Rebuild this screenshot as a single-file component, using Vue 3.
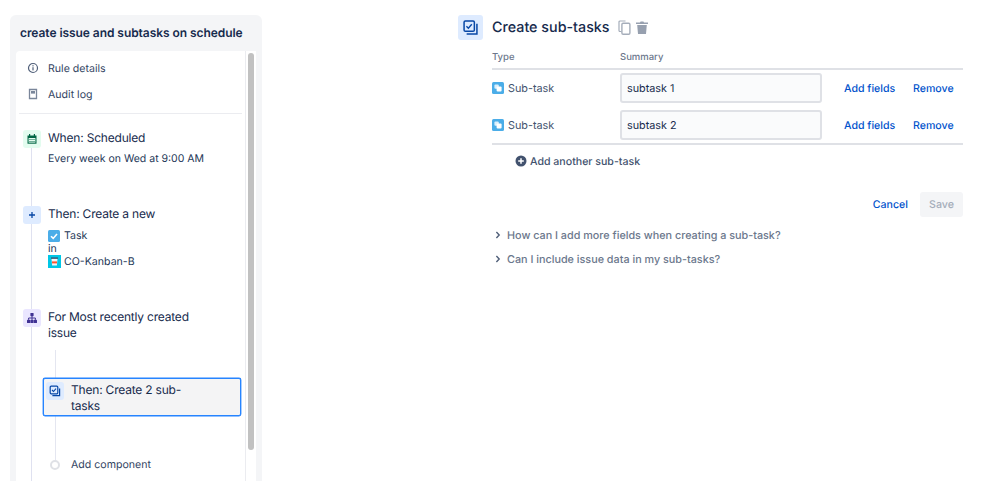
<script setup>
const rows = ['subtask 1', 'subtask 2']
const faqs = ['How can I add more fields when creating a sub-task?', 'Can I include issue data in my sub-tasks?']
</script>

<template>
  <div class="page">
    <aside class="sidebar">
      <h2 class="rule-name">create issue and subtasks on schedule</h2>
      <div class="panel">
        <div class="panel-body">
          <div class="menu-row">
            <svg class="menu-icon" viewBox="0 0 12 12"><circle cx="6" cy="6" r="4.5" fill="none" stroke="#505f79" stroke-width="1.2"/><rect x="5.4" y="5.2" width="1.2" height="3.2" fill="#505f79"/><rect x="5.4" y="3.2" width="1.2" height="1.2" fill="#505f79"/></svg>
            <span>Rule details</span>
          </div>
          <div class="menu-row">
            <svg class="menu-icon" viewBox="0 0 12 12"><path d="M2.5 1.5h7v9h-7z" fill="#fff" stroke="#7a869a" stroke-width="1.3"/><rect x="4" y="3" width="4" height="2.6" fill="#7a869a"/></svg>
            <span>Audit log</span>
          </div>
          <div class="divider"></div>

          <div class="timeline">
            <section class="step step-when">
              <span class="node node-green">
                <svg viewBox="0 0 12 12" width="12" height="12"><path d="M1.5 2.5h9v8.2h-9z" fill="#006644"/><rect x="3" y="1" width="1.2" height="2.5" fill="#006644"/><rect x="7.8" y="1" width="1.2" height="2.5" fill="#006644"/><rect x="2.6" y="5" width="6.8" height="4.6" fill="#e3fcef"/><path d="M3.5 6h1v1h-1zM5.5 6h1v1h-1zM7.5 6h1v1h-1zM3.5 8h1v1h-1zM5.5 8h1v1h-1zM7.5 8h1v1h-1z" fill="#006644"/></svg>
              </span>
              <div class="step-text">
                <div class="step-title">When: Scheduled</div>
                <div class="step-sub">Every week on Wed at 9:00 AM</div>
              </div>
            </section>

            <section class="step step-then">
              <span class="node node-blue">
                <svg viewBox="0 0 10 10" width="10" height="10"><path d="M5 2v6M2 5h6" stroke="#0747a6" stroke-width="1.3" fill="none"/></svg>
              </span>
              <div class="step-text">
                <div class="step-title">Then: Create a new</div>
                <div class="detail detail-task">
                  <svg viewBox="0 0 12 12" width="12" height="12"><rect width="12" height="12" rx="1.5" fill="#4bade8"/><path d="M3 6.2l2.2 2.2L9 4" stroke="#fff" stroke-width="1.6" fill="none"/></svg>
                  <span>Task</span>
                </div>
                <div class="detail detail-in">in</div>
                <div class="detail detail-project">
                  <svg viewBox="0 0 13 13" width="13" height="13"><rect width="13" height="13" fill="#00c7e6"/><path d="M3.5 3.5h6l-.6 7H4.1z" fill="#f4f5f7"/><rect x="3" y="2.4" width="7" height="1.4" fill="#42526e"/><rect x="4" y="6.4" width="5" height="2" fill="#ff5630"/></svg>
                  <span>CO-Kanban-B</span>
                </div>
              </div>
            </section>

            <section class="step step-for">
              <span class="node node-purple">
                <svg viewBox="0 0 12 12" width="12" height="12"><g fill="#403294"><rect x="4.4" y="1" width="3.2" height="3.2" rx=".6"/><rect x="1" y="7.8" width="3.2" height="3.2" rx=".6"/><rect x="4.4" y="7.8" width="3.2" height="3.2" rx=".6"/><rect x="7.8" y="7.8" width="3.2" height="3.2" rx=".6"/></g><path d="M6 4v3.8M2.6 7.8V6h6.8v1.8" stroke="#403294" fill="none"/></svg>
              </span>
              <div class="step-text step-text-wide">
                <div class="step-title">For Most recently created issue</div>
              </div>
            </section>

            <div class="nested">
              <section class="selected">
                <span class="node node-blue">
                  <svg viewBox="0 0 12 12" width="12" height="12"><rect x="1.2" y="1.2" width="7.6" height="7.6" rx="1" fill="none" stroke="#0747a6" stroke-width="1.2"/><path d="M3 5l1.5 1.5L7 3.6" fill="none" stroke="#0747a6" stroke-width="1.1"/><path d="M10.6 3.4v7.2H3.4" fill="none" stroke="#0747a6" stroke-width="1.2"/></svg>
                </span>
                <div class="selected-text">Then: Create 2 sub-tasks</div>
              </section>
              <div class="add-component">
                <span class="circle"></span>
                <span>Add component</span>
              </div>
            </div>
          </div>
        </div>
        <div class="scroll-track"><div class="scroll-thumb"></div></div>
      </div>
    </aside>

    <main class="main">
      <header class="head">
        <span class="head-icon">
          <svg viewBox="0 0 14 14" width="15" height="15"><rect x="1" y="1" width="9.6" height="9.6" rx="1.2" fill="none" stroke="#0747a6" stroke-width="1.4"/><path d="M3.2 5.8l1.8 1.8 3.2-3.6" fill="none" stroke="#0747a6" stroke-width="1.3"/><path d="M13 3.4V13H3.4" fill="none" stroke="#0747a6" stroke-width="1.4"/></svg>
        </span>
        <h1>Create sub-tasks</h1>
        <svg class="copy" viewBox="0 0 13 15" width="13" height="15"><path d="M3.5 11.5H2a1 1 0 0 1-1-1V2a1 1 0 0 1 1-1h5.5" fill="none" stroke="#a5adba" stroke-width="1.2"/><rect x="3.9" y="3.2" width="8" height="11" rx="1.2" fill="#fff" stroke="#a5adba" stroke-width="1.4"/></svg>
        <svg class="trash" viewBox="0 0 12 13" width="12" height="13"><path d="M0 1.6h4L4.6.5h2.8L8 1.6h4v1.5H0z" fill="#97a0af"/><path d="M1.2 4h9.6l-.8 9H2z" fill="#97a0af"/></svg>
      </header>

      <div class="table">
        <div class="grid-row table-head">
          <span>Type</span>
          <span>Summary</span>
        </div>
        <div class="rows">
          <div v-for="r in rows" :key="r" class="grid-row data-row">
            <div class="type-cell">
              <svg viewBox="0 0 12 12" width="12" height="12"><rect width="12" height="12" rx="1.5" fill="#4bade8"/><rect x="2.4" y="2.4" width="4.4" height="4.4" rx="1" fill="#fff" opacity=".8"/><rect x="4.6" y="4.6" width="5" height="5" rx="1" fill="#fff"/></svg>
              <span>Sub-task</span>
            </div>
            <div class="input">{{ r }}</div>
            <a class="link add-fields">Add fields</a>
            <a class="link remove">Remove</a>
          </div>
        </div>
        <div class="add-another">
          <svg viewBox="0 0 12 12" width="12" height="12"><circle cx="6" cy="6" r="5.5" fill="#42526e"/><path d="M6 3.2v5.6M3.2 6h5.6" stroke="#fff" stroke-width="1.5"/></svg>
          <span>Add another sub-task</span>
        </div>
        <div class="actions">
          <a class="link cancel">Cancel</a>
          <span class="save">Save</span>
        </div>
      </div>

      <div class="faqs">
        <div v-for="f in faqs" :key="f" class="faq">
          <svg viewBox="0 0 6 8" width="6" height="8"><path d="M1.4 1l2.8 3-2.8 3" fill="none" stroke="#505f79" stroke-width="1.4"/></svg>
          <span>{{ f }}</span>
        </div>
      </div>
    </main>
  </div>
</template>

<style>
html, body { margin: 0; background: #fff; }
</style>

<style scoped>
.page {
  display: flex;
  align-items: flex-start;
  width: 998px;
  height: 481px;
  overflow: hidden;
  font-family: Inter, "Liberation Sans", sans-serif;
  color: #172b4d;
  background: #fff;
  text-rendering: geometricPrecision;
}
.sidebar {
  flex: none;
  width: 252px;
  height: 520px;
  margin: 15px 0 0 10px;
  padding: 0 6px;
  box-sizing: border-box;
  background: #f4f5f7;
  border-radius: 6px;
}
.rule-name {
  margin: 0;
  padding: 10px 4px 0;
  height: 36px;
  box-sizing: border-box;
  font-size: 12px;
  line-height: 16px;
  font-weight: 600;
  letter-spacing: -.06px;
  white-space: nowrap;
}
.panel {
  display: flex;
  height: 480px;
  background: #fff;
  border-radius: 4px 0 0 0;
}
.panel-body {
  width: 230px;
  box-sizing: border-box;
  border-right: 1px solid #ebecf0;
  padding: 4px 3px 0 3px;
  flex: none;
}
.scroll-track {
  flex: 1;
  padding: 2px 2px 0 2px;
}
.scroll-thumb {
  width: 6px;
  height: 397px;
  border-radius: 3px;
  background: #c1c1c1;
}
.menu-row {
  display: flex;
  align-items: center;
  height: 26px;
  font-size: 10.6px;
  color: #344563;
  padding-left: 8px;
}
.menu-icon {
  width: 12px;
  height: 12px;
  margin-right: 9px;
}
.divider {
  height: 1px;
  background: #ebecf0;
  margin-top: 6px;
}
.timeline {
  position: relative;
  padding: 16px 0 0 4px;
}
.timeline::before {
  content: "";
  position: absolute;
  left: 12px;
  top: 30px;
  bottom: -200px;
  width: 1px;
  background: #dfe1f0;
}
.step {
  position: relative;
  display: flex;
  gap: 7px;
}
.step-when { height: 76px; }
.step-then { height: 103px; }
.step-for { height: 69px; }
.node {
  position: relative;
  flex: none;
  display: flex;
  align-items: center;
  justify-content: center;
  width: 18px;
  height: 18px;
  border-radius: 3px;
}
.node-green { background: #e3fcef; }
.node-blue { background: #deebff; }
.node-purple { background: #eae6ff; }
.step-text-wide { width: 160px; }
.step-title {
  font-size: 12px;
  line-height: 16px;
  letter-spacing: -.2px;
  color: #172b4d;
}
.step-sub {
  margin-top: 5px;
  font-size: 10.5px;
  line-height: 16px;
  color: #253858;
}
.detail {
  display: flex;
  align-items: center;
  gap: 4px;
  font-size: 10.6px;
  line-height: 13px;
  color: #253858;
}
.detail-task { margin-top: 7px; }
.detail-project { gap: 3px; }
.nested {
  position: relative;
  margin-left: 20px;
}
.nested::before {
  content: "";
  position: absolute;
  left: 12px;
  top: -28px;
  height: 111px;
  width: 1px;
  background: #e4e6f0;
}
.selected {
  position: relative;
  display: flex;
  gap: 7px;
  box-sizing: border-box;
  width: 198px;
  height: 38px;
  padding: 3px 2px;
  border: 1px solid #2684ff;
  border-radius: 2px;
  background: #f4f4f5;
  box-shadow: 0 0 0 .4px #2684ff;
}
.selected-text {
  width: 120px;
  font-size: 12px;
  line-height: 16px;
  letter-spacing: -.2px;
}
.add-component {
  position: relative;
  display: flex;
  align-items: center;
  gap: 11px;
  margin: 42px 0 0 7px;
  font-size: 10.6px;
  line-height: 14px;
  color: #344563;
}
.circle {
  flex: none;
  box-sizing: border-box;
  width: 10px;
  height: 10px;
  border-radius: 50%;
  border: 2px solid #dfe1e6;
  background: #fff;
}
.main {
  flex: none;
  width: 505px;
  margin: 15px 0 0 196px;
}
.head {
  display: flex;
  align-items: center;
  height: 25px;
}
.head-icon {
  display: flex;
  align-items: center;
  justify-content: center;
  width: 25px;
  height: 25px;
  margin-right: 9px;
  border-radius: 3px;
  background: #deebff;
}
h1 {
  width: 120px;
  margin: 0 6px 0 0;
  font-size: 14.3px;
  line-height: 25px;
  font-weight: 500;
  color: #172b4d;
  white-space: nowrap;
}
.trash { margin-left: 5px; }
.table {
  margin-left: 34px;
  width: 471px;
}
.grid-row {
  display: grid;
  grid-template-columns: 128px 202px 22px 51px 18px 41px;
  align-items: center;
}
.table-head {
  height: 27px;
  padding-top: 5px;
  box-sizing: border-box;
  font-size: 9.5px;
  font-weight: 500;
  color: #6b778c;
  margin-top: 1px;
}
.rows {
  border-top: 2px solid #dfe1e6;
  border-bottom: 2px solid #dfe1e6;
  padding: 3px 0;
}
.data-row { height: 30px; }
.data-row + .data-row { margin-top: 7px; }
.type-cell {
  display: flex;
  align-items: center;
  gap: 4px;
  font-size: 10.8px;
  color: #42526e;
}
.input {
  box-sizing: border-box;
  height: 30px;
  line-height: 27px;
  padding: 0 5px;
  border: 2px solid #dfe1e6;
  border-radius: 3px;
  background: #fafbfc;
  font-size: 10.8px;
  color: #172b4d;
}
.link {
  font-size: 10.6px;
  font-weight: 500;
  color: #0052cc;
  white-space: nowrap;
}
.add-fields { grid-column: 4; }
.remove { grid-column: 6; }
.add-another {
  display: flex;
  align-items: center;
  gap: 3px;
  height: 14px;
  margin: 9px 0 0 23px;
  font-size: 10.6px;
  font-weight: 500;
  color: #42526e;
}
.actions {
  display: flex;
  align-items: center;
  justify-content: flex-end;
  gap: 12px;
  margin-top: 24px;
}
.save {
  width: 43px;
  height: 25px;
  line-height: 25px;
  text-align: center;
  border-radius: 3px;
  background: #f4f5f7;
  font-size: 10.7px;
  font-weight: 500;
  color: #a5adba;
}
.faqs {
  margin: 6px 0 0 37px;
}
.faq {
  display: flex;
  align-items: center;
  gap: 6px;
  height: 24px;
  font-size: 10.8px;
  font-weight: 500;
  color: #6b778c;
}
</style>
